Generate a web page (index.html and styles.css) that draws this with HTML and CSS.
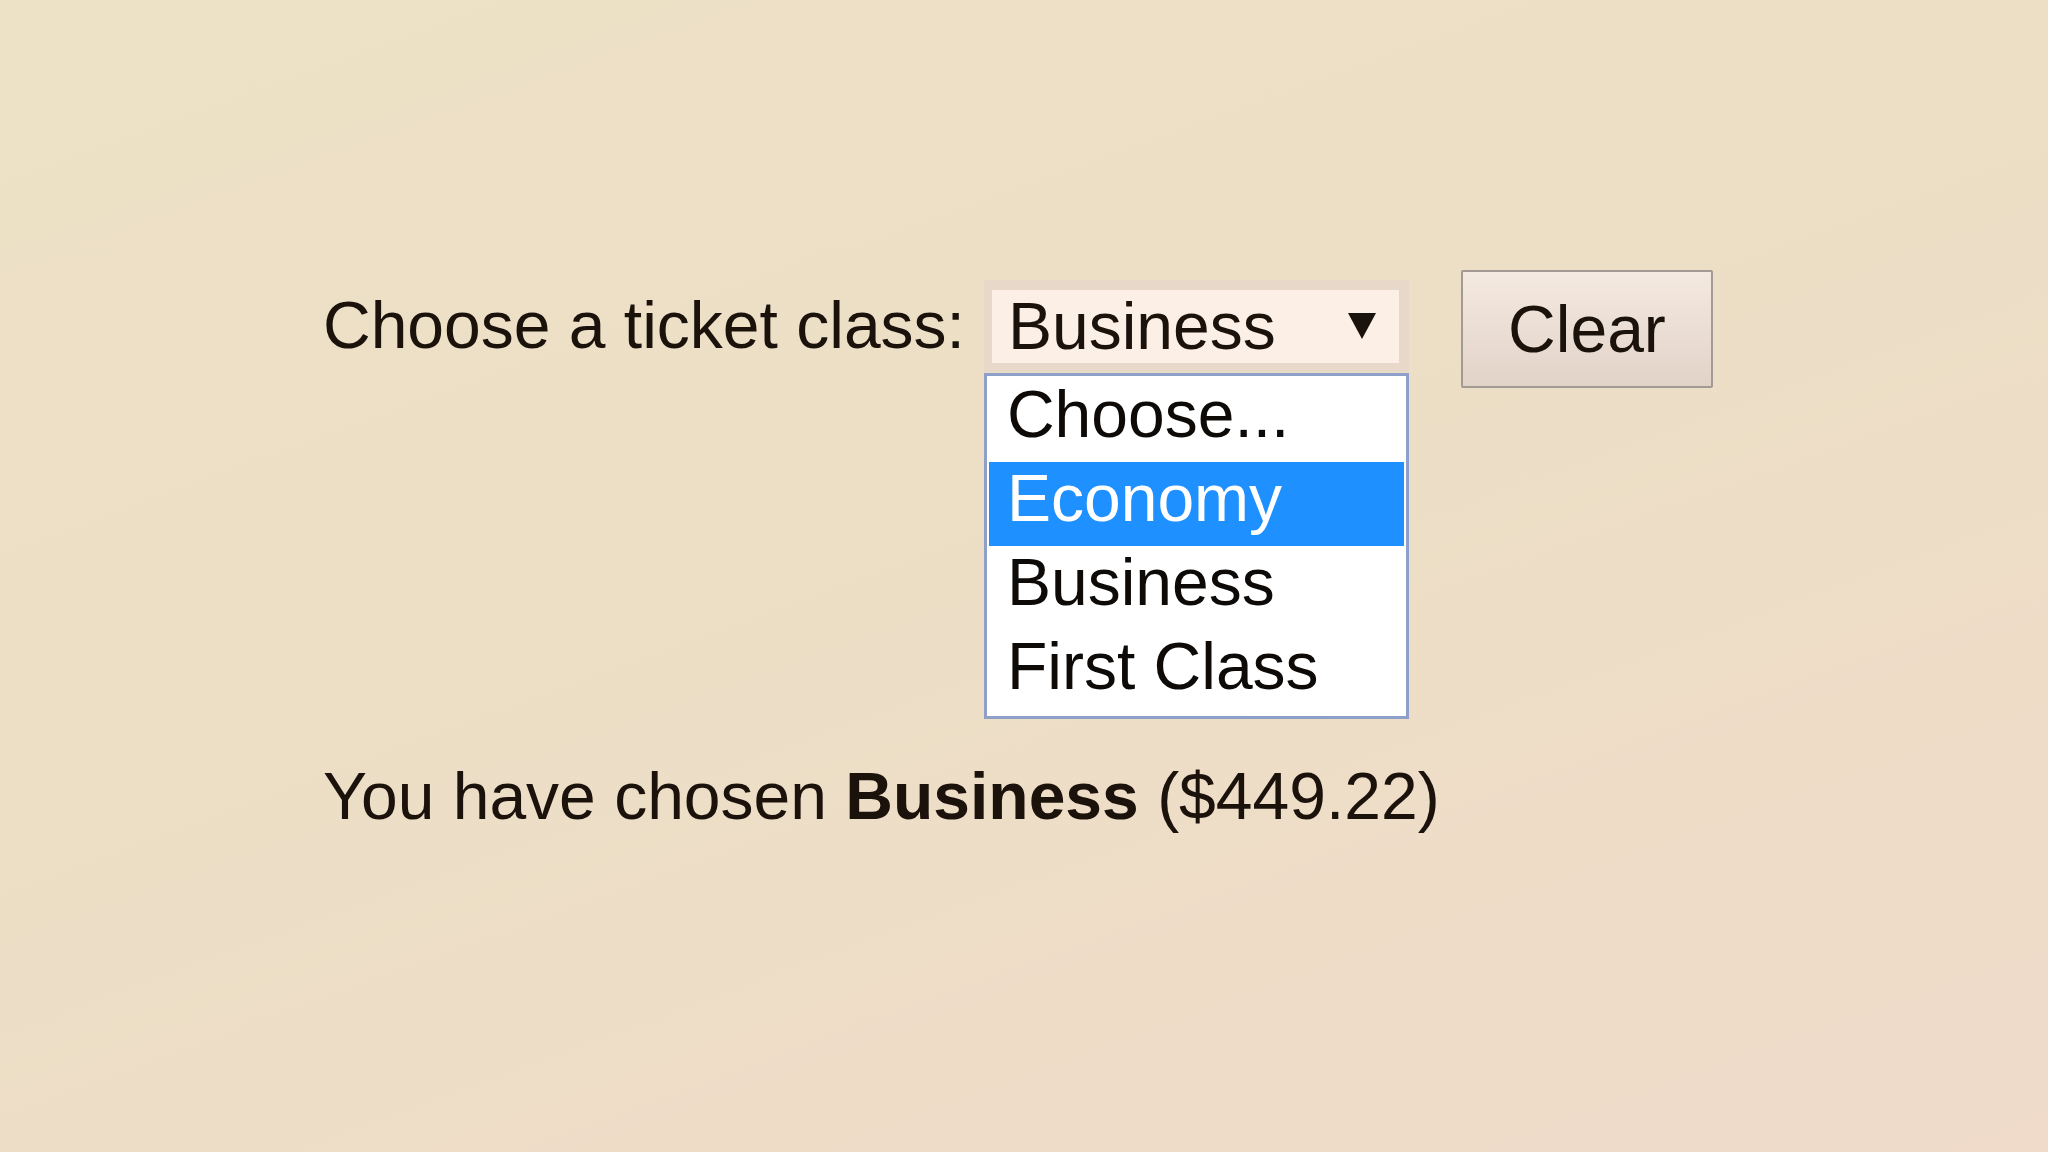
FILE: index.html
```html
<!DOCTYPE html>
<html lang="en">
<head>
<meta charset="utf-8">
<title>Ticket class</title>
<link rel="stylesheet" href="styles.css">
</head>
<body>
<main class="page">
  <div class="row">
    <label class="label" for="cls">Choose a ticket class:</label>
    <div class="select-wrap">
      <div class="select" id="cls">
        <span class="select-value">Business</span>
        <svg class="arrow" viewBox="0 0 28 26" width="28" height="26" aria-hidden="true"><polygon points="0,0 28,0 14,26" fill="#1a120c"/></svg>
      </div>
      <ul class="dropdown">
        <li class="option">Choose...</li>
        <li class="option option-active">Economy</li>
        <li class="option">Business</li>
        <li class="option">First Class</li>
      </ul>
    </div>
    <button class="btn" type="button">Clear</button>
  </div>
  <p class="result">You have chosen <strong>Business</strong> ($449.22)</p>
</main>
</body>
</html>
```

FILE: styles.css
```css
html, body {
  margin: 0;
  padding: 0;
}
body {
  width: 2048px;
  height: 1152px;
  overflow: hidden;
  background: linear-gradient(160deg, #ede1c6 0%, #ecdfc6 45%, #efdcc8 80%, #f0dbca 100%);
  font-family: "Liberation Sans", Arial, sans-serif;
  font-size: 66px;
  color: #1b120c;
}
.page {
  padding: 270px 0 0 323px;
}
.row {
  display: flex;
  align-items: flex-start;
}
.label {
  line-height: 76px;
  margin: 17px 19px 0 0;
}
.select-wrap {
  position: relative;
  margin: 10px 52px 0 0;
}
.select {
  box-sizing: border-box;
  width: 425px;
  height: 92px;
  border-style: solid;
  border-color: #e7d8ca;
  border-width: 10px 10px 9px 8px;
  background: #fcefe5;
  display: flex;
  align-items: center;
  justify-content: space-between;
  padding: 0 23px 0 16px;
  line-height: 73px;
}
.arrow {
  display: block;
  margin-top: -2px;
}
.dropdown {
  position: absolute;
  top: 93px;
  left: 0;
  box-sizing: border-box;
  width: 425px;
  margin: 0;
  padding: 2px;
  list-style: none;
  background: #ffffff;
  border: 3px solid #8e9fca;
  color: #0d0a08;
}
.option {
  height: 84px;
  line-height: 72px;
  padding-left: 18px;
}
.option-active {
  background: #1e90ff;
  color: #ffffff;
}
.btn {
  box-sizing: border-box;
  width: 252px;
  height: 118px;
  border: 2px solid #a39a93;
  border-radius: 2px;
  background: linear-gradient(#f4e9e0, #e2d3c8);
  font-family: inherit;
  font-size: 66px;
  color: #1b120c;
  padding: 0;
}
.result {
  margin: 370px 0 0;
  line-height: 76px;
}
.result strong {
  font-weight: bold;
}
```
